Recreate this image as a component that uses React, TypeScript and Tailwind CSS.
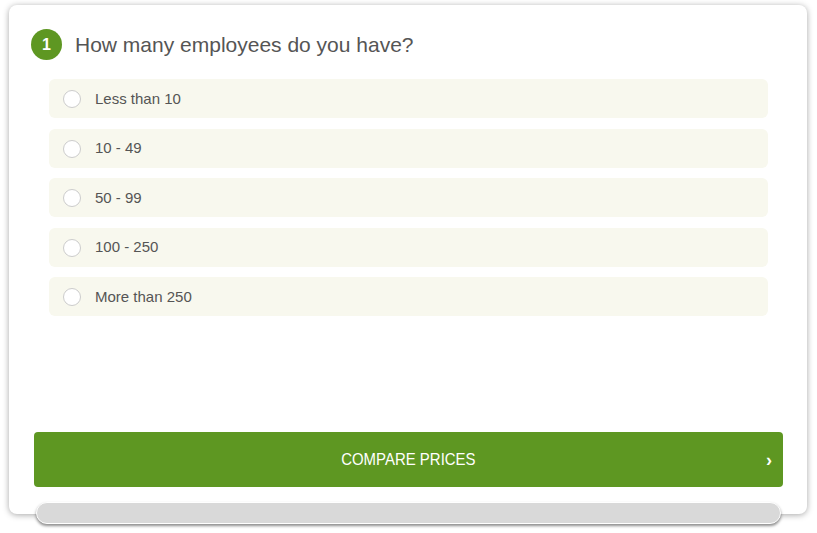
import React from 'react';

const options = ['Less than 10', '10 - 49', '50 - 99', '100 - 250', 'More than 250'];

export default function App() {
  return (
    <div className="w-[817px] h-[533px] bg-white pt-[5px] pl-[9px]" style={{ fontFamily: '"Liberation Sans", Arial, sans-serif' }}>
      <div className="relative w-[798px] h-[509px] bg-white rounded-[8px] shadow-[0_1px_6px_rgba(0,0,0,0.35)] flex flex-col">
        <div className="flex items-center pl-[22px] pt-[24px]">
          <div className="w-[31px] h-[31px] rounded-full bg-[#5e9722] text-white text-[16px] font-bold flex items-center justify-center">
            1
          </div>
          <h2 className="ml-[13px] text-[21px] leading-[28px] text-[#555555]">How many employees do you have?</h2>
        </div>

        <div className="flex flex-col gap-[10.5px] mt-[19px] mx-[40px] mr-[39px]">
          {options.map((o) => (
            <label key={o} className="h-[39px] rounded-[6px] bg-[#f8f8ee] flex items-center pl-[14px] pt-[1px] cursor-pointer">
              <span className="w-[18px] h-[18px] rounded-full bg-white border border-[#cccccc]" />
              <span className="ml-[14px] text-[15px] text-[#555555]">{o}</span>
            </label>
          ))}
        </div>

        <div className="flex-1" />

        <button className="relative mx-[25px] mr-[24px] mb-[27px] h-[55px] rounded-[4px] bg-[#5e9722] text-white flex items-center justify-center">
          <span className="text-[17px] inline-block scale-x-[0.88]">
            COMPARE PRICES
          </span>
          <span className="absolute right-[11px] top-[15px] text-[18px] font-bold">›</span>
        </button>

        <div className="absolute left-[27px] right-[26px] top-[497px] h-[22px] rounded-full bg-[#d9d9d9] border border-white shadow-[0_2px_3px_rgba(0,0,0,0.45)]" />
      </div>
    </div>
  );
}
